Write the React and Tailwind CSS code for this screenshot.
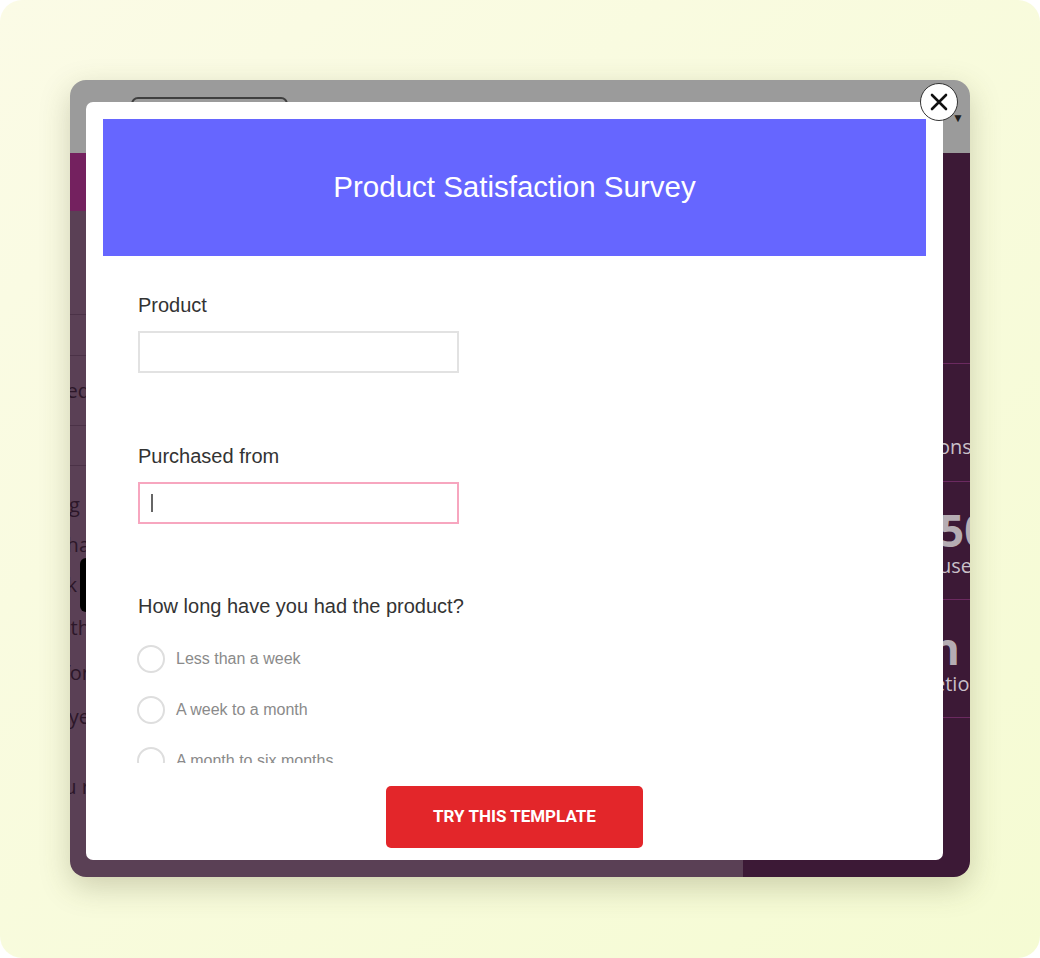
import React from "react";

function CloseIcon() {
  return (
    <svg width="18" height="18" viewBox="0 0 18 18" fill="none">
      <path d="M2 2L16 16M16 2L2 16" stroke="#111" strokeWidth="2.6" strokeLinecap="round" />
    </svg>
  );
}

function Radio({ label }) {
  return (
    <div className="flex items-center gap-[11px] h-[28px] -ml-[1px]">
      <span className="w-[28px] h-[28px] rounded-full border-2 border-[#dedede] bg-white shrink-0" />
      <span className="text-[16px] text-[#8a8a8a] font-['Liberation_Sans',Arial,sans-serif] whitespace-nowrap">
        {label}
      </span>
    </div>
  );
}

function BackRow({ h, children }) {
  return (
    <div className={`${h} w-[20px] flex items-center justify-end whitespace-nowrap`}>
      {children}
    </div>
  );
}

export default function App() {
  return (
    <div className="w-[1040px] h-[958px] bg-white">
      <div className="w-full h-full rounded-[22px] bg-gradient-to-br from-[#fbfbe6] to-[#f5fbd3] pl-[70px] pt-[80px]">
        {/* dimmed page behind the modal */}
        <div className="relative w-[900px] h-[797px] rounded-[16px] overflow-hidden shadow-[0_10px_30px_rgba(80,80,40,0.25)] flex flex-col font-['Open_Sans',sans-serif]">
          <div className="h-[73px] bg-[#9b9b9b] flex items-start shrink-0">
            <div className="ml-[61px] mt-[17px] w-[157px] h-[40px] rounded-[7px] border-2 border-[#3f3f3f]" />
            <div className="ml-auto mr-[6px] mt-[32px] flex gap-[6px] text-[12px] leading-none text-[#222]">
              <span>▼</span>
              <span>▼</span>
            </div>
          </div>
          <div className="flex flex-1 min-h-0">
            {/* left column */}
            <div className="w-[673px] shrink-0 bg-[#5a4055] flex flex-col text-[20px] text-[#2c1729]">
              <div className="h-[58px] bg-[#74215f]" />
              <div className="h-[104px] border-b border-[#4b3247]" />
              <div className="h-[41px] border-b border-[#4b3247]" />
              <div className="h-[70px] border-b border-[#4b3247]">
                <BackRow h="h-full">Connected</BackRow>
              </div>
              <div className="h-[40px] border-b border-[#4b3247]" />
              <div className="h-[19px]" />
              <BackRow h="h-[40px]">Using l</BackRow>
              <BackRow h="h-[40px]">Do you ha</BackRow>
              <div className="h-[40px] w-[30px] flex items-center justify-end whitespace-nowrap">
                <span>a week</span>
                <span className="ml-[3px] w-[20px] h-[54px] bg-black rounded-l-[6px] shrink-0" />
              </div>
              <BackRow h="h-[45px]">a month</BackRow>
              <BackRow h="h-[45px]">for</BackRow>
              <BackRow h="h-[43px]">a ye</BackRow>
              <div className="h-[67px] w-[20px] flex items-end justify-end pb-[3px] whitespace-nowrap">you r</div>
            </div>
            {/* right column */}
            <div className="flex-1 min-w-0 bg-[#3c1936] flex flex-col whitespace-nowrap">
              <div className="h-[211px] border-b border-[#6b2a60]" />
              <div className="h-[118px] border-b border-[#6b2a60] flex flex-col justify-end pb-[19px] pl-[195px] text-[20px] text-[#c9c0c8]">
                ons
              </div>
              <div className="h-[118px] border-b border-[#6b2a60] flex flex-col justify-center pt-[4px] pl-[196px]">
                <span className="text-[44px] leading-[46px] font-bold text-[#b5adb3]">500+</span>
                <span className="text-[20px] leading-[26px] text-[#c9c0c8]">users</span>
              </div>
              <div className="h-[118px] border-b border-[#6b2a60] flex flex-col justify-center pt-[4px] pl-[188px]">
                <span className="text-[44px] leading-[46px] font-bold text-[#b5adb3]">n</span>
                <span className="text-[20px] leading-[26px] text-[#c9c0c8] pl-[3px]">etion</span>
              </div>
            </div>
          </div>

          {/* modal */}
          <div className="absolute left-[16px] top-[22px] w-[857px] h-[758px] bg-white rounded-[7px] flex flex-col font-['Liberation_Sans',Arial,sans-serif]">
            <div className="h-[661px] overflow-hidden px-[17px] pt-[17px]">
              <div className="h-[137px] bg-[#6666ff] flex items-center justify-center text-white text-[29.5px]">
                Product Satisfaction Survey
              </div>
              <div className="px-[35px] pt-[37px]">
                <div className="text-[20px] leading-[24px] text-[#333]">Product</div>
                <div className="mt-[14px] w-[321px] h-[42px] border-2 border-[#e2e2e2]" />
                <div className="mt-[71px] text-[20px] leading-[24px] text-[#333]">Purchased from</div>
                <div className="mt-[14px] w-[321px] h-[42px] border-2 border-[#f7a6bf] flex items-center pl-[11px]">
                  <span className="w-[1.5px] h-[18px] bg-[#666]" />
                </div>
                <div className="mt-[70px] text-[20px] leading-[24px] text-[#333]">
                  How long have you had the product?
                </div>
                <div className="mt-[27px] flex flex-col gap-[23px]">
                  <Radio label="Less than a week" />
                  <Radio label="A week to a month" />
                  <Radio label="A month to six months" />
                  <Radio label="Six months to a year" />
                </div>
              </div>
            </div>
            <div className="flex justify-center pt-[23px]">
              <button className="w-[257px] h-[62px] rounded-[5px] bg-[#e3262a] text-white text-[17px] font-bold font-['Roboto',sans-serif]">
                TRY THIS TEMPLATE
              </button>
            </div>
            <button className="absolute -top-[19px] left-[834px] w-[38px] h-[38px] rounded-full bg-white border-[1.5px] border-[#333] flex items-center justify-center">
              <CloseIcon />
            </button>
          </div>
        </div>
      </div>
    </div>
  );
}
